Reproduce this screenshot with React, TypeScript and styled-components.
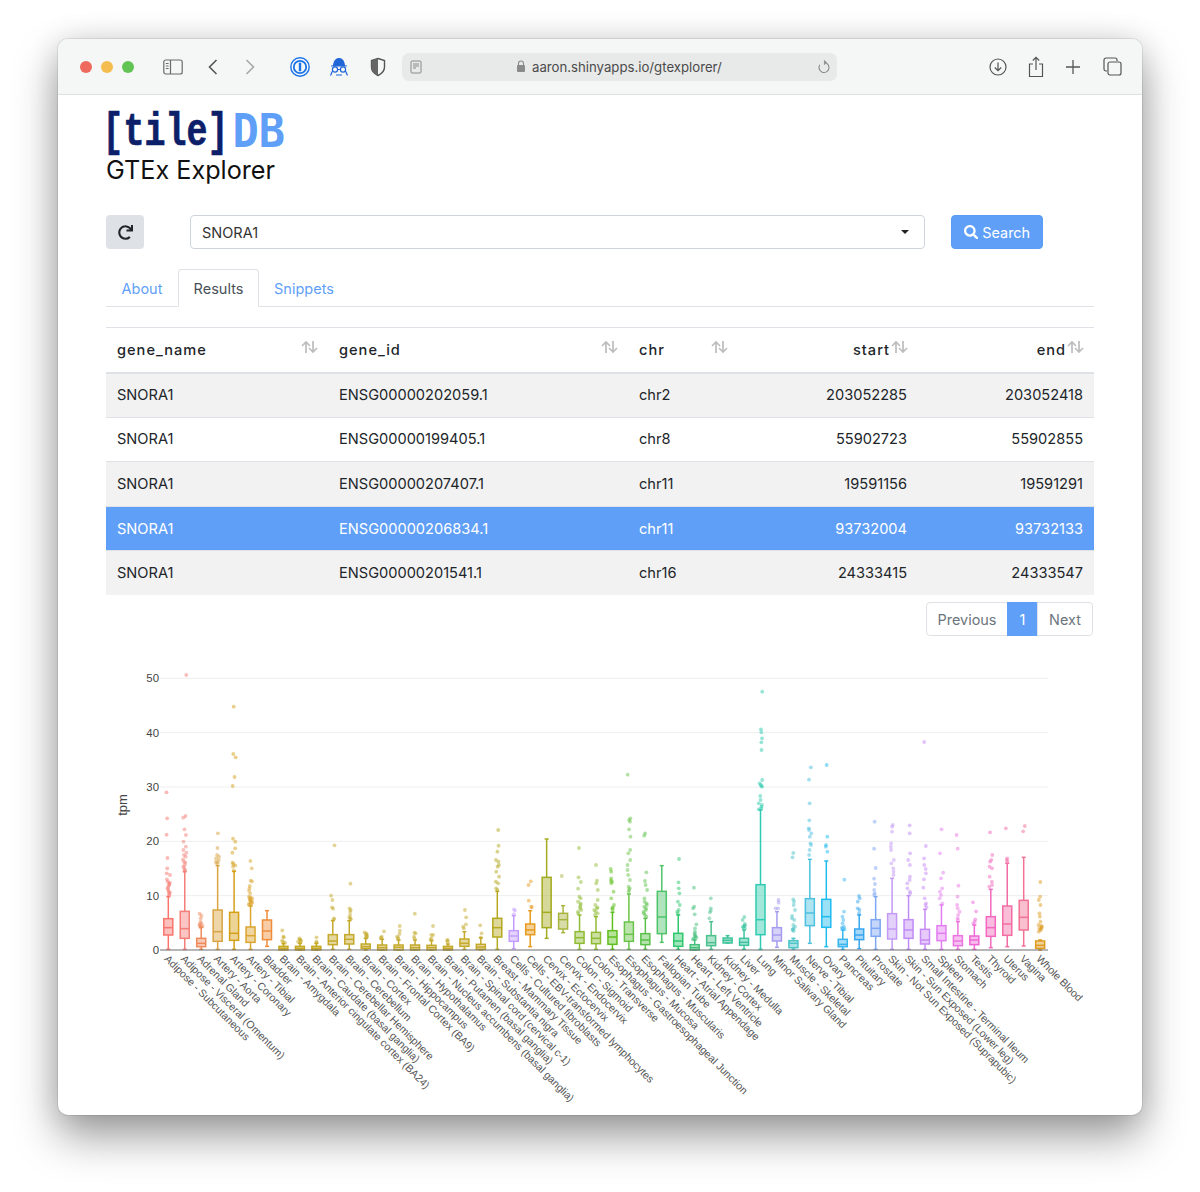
import React from "react";
import styled, { createGlobalStyle } from "styled-components";
import { FaRedo, FaSearch } from "react-icons/fa";

const Global = createGlobalStyle`
  html, body { margin: 0; padding: 0; background: #fff; }
  body { font-family: Inter, "Liberation Sans", sans-serif; color: #212529; }
`;

const Page = styled.div`
  width: 1200px;
  height: 1192px;
  padding: 39px 58px 0;
  box-sizing: border-box;
  overflow: hidden;
`;
const Win = styled.div`
  width: 1084px;
  height: 1076px;
  background: #fff;
  border-radius: 10px;
  overflow: hidden;
  box-shadow: 0 0 0 1px rgba(0, 0, 0, 0.08), 0 22px 44px rgba(0, 0, 0, 0.38), 0 0 30px rgba(0, 0, 0, 0.12);
`;
const Toolbar = styled.header`
  height: 56px;
  box-sizing: border-box;
  background: #f5f6f6;
  border-bottom: 1px solid #dfdfdf;
  display: flex;
  align-items: center;
  padding-left: 22px;
`;
const Dot = styled.span<{ $c: string }>`
  width: 12px;
  height: 12px;
  border-radius: 50%;
  background: ${(p) => p.$c};
  margin-right: 9px;
  flex: none;
`;
const Tool = styled.svg<{ $ml: number }>`
  flex: none;
  display: block;
  margin-left: ${(p) => p.$ml}px;
`;
const UrlBar = styled.div`
  margin-left: 16px;
  width: 435px;
  height: 28px;
  background: #e8e9e9;
  border-radius: 7px;
  display: flex;
  align-items: center;
  padding: 0 6px 0 8px;
  box-sizing: border-box;
  flex: none;
`;
const UrlText = styled.span`
  font-size: 13.2px;
  color: #4b4b4b;
  margin-left: 6px;
  font-family: Inter, sans-serif;
`;
const Content = styled.main`
  padding: 0 48px;
`;
const LogoSvg = styled.svg`
  display: block;
  margin-top: 8px;
  overflow: visible;
`;
const Title = styled.h1`
  margin: -1px 0 0;
  font-size: 25.2px;
  line-height: 32px;
  font-weight: 400;
  color: #111;
`;
const Controls = styled.div`
  display: flex;
  margin-top: 29px;
  height: 34px;
`;
const RefreshBtn = styled.button`
  width: 38px;
  height: 34px;
  border: 0;
  border-radius: 4px;
  background: #dee2e6;
  color: #212529;
  display: flex;
  align-items: center;
  justify-content: center;
  padding: 0;
  font-size: 15px;
`;
const SelectBox = styled.div`
  margin-left: 46px;
  width: 735px;
  box-sizing: border-box;
  border: 1px solid #ced4da;
  border-radius: 4px;
  display: flex;
  align-items: center;
  justify-content: space-between;
  padding: 0 15px 0 11px;
  font-size: 14.5px;
  color: #333;
`;
const Caret = styled.span`
  width: 0;
  height: 0;
  border-left: 4px solid transparent;
  border-right: 4px solid transparent;
  border-top: 4px solid #222;
`;
const SearchBtn = styled.button`
  margin-left: 26px;
  width: 92px;
  border: 1px solid #5a9bf3;
  border-radius: 4px;
  background: #5f9ff8;
  color: #fff;
  font: 400 14.4px Inter, sans-serif;
  display: flex;
  align-items: center;
  justify-content: center;
  gap: 4px;
  padding: 0;
`;
const Tabs = styled.nav`
  display: flex;
  margin-top: 20px;
  height: 38px;
  box-sizing: border-box;
  border-bottom: 1px solid #dee2e6;
  font-size: 14.5px;
`;
const Tab = styled.span<{ $active?: boolean; $w: number }>`
  width: ${(p) => p.$w}px;
  height: 38px;
  box-sizing: border-box;
  display: flex;
  align-items: center;
  justify-content: center;
  border: 1px solid ${(p) => (p.$active ? "#dee2e6" : "transparent")};
  border-bottom-color: ${(p) => (p.$active ? "#fff" : "transparent")};
  border-radius: 4px 4px 0 0;
  color: ${(p) => (p.$active ? "#495057" : "#5f9ff8")};
  background: ${(p) => (p.$active ? "#fff" : "transparent")};
`;
const Table = styled.table`
  margin-top: 20px;
  width: 988px;
  table-layout: fixed;
  border-collapse: collapse;
  font-size: 14.6px;
`;
const Th = styled.th<{ $w: number }>`
  width: ${(p) => p.$w}px;
  height: 45px;
  padding: 0 10px 0 11px;
  box-sizing: border-box;
  border-top: 1px solid #dee2e6;
  border-bottom: 2px solid #dee2e6;
  font-weight: 500;
  letter-spacing: 1px;
  color: #212529;
`;
const ThInner = styled.div<{ $right?: boolean }>`
  display: flex;
  align-items: center;
  justify-content: ${(p) => (p.$right ? "flex-end" : "space-between")};
`;
const SortIcon = styled.svg`
  flex: none;
  display: block;
  margin-top: -5px;
  margin-left: 1px;
`;
const Tr = styled.tr<{ $odd: boolean; $sel: boolean }>`
  background: ${(p) => (p.$sel ? "#5f9ff8" : p.$odd ? "#f2f2f2" : "#fff")};
  color: ${(p) => (p.$sel ? "#fff" : "#212529")};
`;
const Td = styled.td<{ $right?: boolean }>`
  height: 44.6px;
  padding: 0 11px;
  box-sizing: border-box;
  border-top: 1px solid #dee2e6;
  text-align: ${(p) => (p.$right ? "right" : "left")};
`;
const Pager = styled.div`
  display: flex;
  justify-content: flex-end;
  margin: 7px 1px 0 0;
  font-size: 14.4px;
`;
const PageBtn = styled.span<{ $active?: boolean; $w: number; $pos?: "l" | "r" }>`
  width: ${(p) => p.$w}px;
  height: 34px;
  box-sizing: border-box;
  display: flex;
  align-items: center;
  justify-content: center;
  border: 1px solid ${(p) => (p.$active ? "#5f9ff8" : "#dee2e6")};
  background: ${(p) => (p.$active ? "#5f9ff8" : "#fff")};
  color: ${(p) => (p.$active ? "#fff" : "#6c757d")};
  border-radius: ${(p) => (p.$pos === "l" ? "4px 0 0 4px" : p.$pos === "r" ? "0 4px 4px 0" : "0")};
  margin-left: ${(p) => (p.$pos === "l" ? "0" : "-1px")};
`;
const ChartSvg = styled.svg`
  display: block;
  margin-top: 24px;
  overflow: visible;
`;
const AxisText = styled.text`
  font-family: "Liberation Sans", Arial, sans-serif;
  font-size: 11.4px;
  fill: #444;
`;
const AxisTitle = styled.text`
  font-family: "Liberation Sans", Arial, sans-serif;
  font-size: 13px;
  fill: #444;
`;
const TickLabel = styled.text`
  font-family: "Liberation Sans", Arial, sans-serif;
  font-size: 10.6px;
  fill: #555;
`;

type Box = { name: string; c: string; hi: number; q3: number; med: number; q1: number; lo: number; out: number[] };
const b = (name: string, c: string, hi: number, q3: number, med: number, q1: number, lo: number, out: number[] = []): Box => ({ name, c, hi, q3, med, q1, lo, out });
const dense = (from: number, to: number, step: number) => {
  const r: number[] = [];
  for (let v = from; v <= to; v += step) r.push(v);
  return r;
};

// Vertical values are in thirds of a pixel, measured down from the top of the plot region.
const boxes: Box[] = [
  b("Adipose - Subcutaneous", "#f8766d", 680, 746, 773, 795, 838, [367, 445, 494, 564, 595, 610, 615, 628, 635, 638, 642, 645, 650, 655, 660, 665, 668, 672, 676]),
  b("Adipose - Visceral (Omentum)", "#f47f78", 605, 724, 776, 805, 838, [15, 438, 443, 478, 495, 515, 530, 540, 548, 555, 560, 568, 575, 578, 585, 590, 595, 600, 603]),
  b("Adrenal Gland", "#ef8a5c", 772, 805, 820, 830, 838, [731, 737, 745, 755, 760, 763, 765, 768, 770, 772]),
  b("Artery - Aorta", "#d9a441", 587, 720, 785, 814, 838, [490, 534, 555, 560, 565, 570, 575, 578, 580]),
  b("Artery - Coronary", "#d4a017", 604, 727, 790, 811, 838, [110, 252, 262, 321, 348, 506, 515, 535, 548, 578, 582, 586, 590, 602]),
  b("Artery - Tibial", "#dba52f", 708, 771, 797, 817, 838, [573, 595, 632, 634, 648, 655, 662, 670, ...dense(680, 706, 2)]),
  b("Bladder", "#ee8e3c", 722, 750, 783, 809, 829),
  b("Brain - Amygdala", "#c6a822", 821, 829, 835, 840, 840, [781, 800, 802, 812, 816, 818]),
  b("Brain - Anterior cingulate cortex (BA24)", "#c6a822", 820, 829, 835, 840, 840, [805, 808, 810, 812, 815, 818]),
  b("Brain - Caudate (basal ganglia)", "#c6a822", 820, 829, 835, 840, 840, [802, 815, 818]),
  b("Brain - Cerebellar Hemisphere", "#c4a92a", 752, 794, 813, 824, 838, [526, 677, 690, 712, 716, 745, 748]),
  b("Brain - Cerebellum", "#c4a92a", 752, 794, 808, 822, 838, [641, 715, 720, 725, 735, 742, 745, 748]),
  b("Brain - Cortex", "#c4a92a", 805, 822, 830, 836, 840, [787, 790, 793, 795, 798, 800, 803]),
  b("Brain - Frontal Cortex (BA9)", "#c4a92a", 808, 825, 833, 840, 840, [784, 800, 803, 805]),
  b("Brain - Hippocampus", "#c4a92a", 810, 825, 832, 840, 840, [768, 782, 792, 800, 803, 807]),
  b("Brain - Hypothalamus", "#c4a92a", 810, 825, 833, 840, 840, [731, 788, 790, 800, 805]),
  b("Brain - Nucleus accumbens (basal ganglia)", "#c4a92a", 812, 826, 833, 840, 840, [768, 795, 795, 806, 808]),
  b("Brain - Putamen (basal ganglia)", "#c4a92a", 822, 829, 835, 840, 840, [810, 812, 815]),
  b("Brain - Spinal cord (cervical c-1)", "#c4a92a", 785, 807, 820, 829, 838, [720, 742, 763, 770, 775]),
  b("Brain - Substantia nigra", "#c4a92a", 803, 823, 831, 838, 840, [766, 790, 803]),
  b("Breast - Mammary Tissue", "#b5a81e", 664, 745, 773, 801, 838, [480, 527, 545, 570, 575, 585, 590, 605, 620, 635, 640, 655, 660]),
  b("Cells - Cultured fibroblasts", "#c49cff", 737, 782, 798, 814, 836, [718, 722, 733]),
  b("Cells - EBV-transformed lymphocytes", "#e79a1d", 722, 762, 780, 794, 830, [634, 645, 692, 711, 711]),
  b("Cervix - Ectocervix", "#a3ab1e", 507, 622, 727, 773, 805),
  b("Cervix - Endocervix", "#a9b43f", 707, 730, 749, 777, 788, [618]),
  b("Colon - Sigmoid", "#8fbb34", 735, 785, 803, 820, 838, [534, 622, 636, 656, 680, 685, 695, 700, 705, 710, 715, 720, 725, 730]),
  b("Colon - Transverse", "#8fbb34", 740, 787, 805, 821, 838, [585, 632, 640, 660, 690, 705, 712, 715, 720, 725, 730, 735]),
  b("Esophagus - Gastroesophageal Junction", "#5fbf1e", 727, 782, 801, 823, 838, [597, 605, 625, 632, 635, 640, 665, 685, 705, 712, 715, 720]),
  b("Esophagus - Mucosa", "#69c34a", 672, 756, 793, 814, 838, [314, 445, 450, 455, 478, 500, 540, 550, 570, 585, 600, 615, 630, 650, 655, 660, 665]),
  b("Esophagus - Muscularis", "#59c14a", 745, 791, 810, 824, 838, [490, 497, 607, 633, 645, 660, 685, 695, 700, 705, 710, 715, 720, 725, 730, 735, 740]),
  b("Fallopian Tube", "#4fc46a", 587, 664, 741, 791, 817),
  b("Heart - Atrial Appendage", "#2ec76d", 735, 790, 813, 829, 838, [567, 637, 655, 670, 695, 705, 720, 725, 730]),
  b("Heart - Left Ventricle", "#43c07a", 810, 824, 833, 840, 840, [653, 710, 715, 733, 763, 775, 785, 790, 795, 798, 800, 803, 805, 808]),
  b("Kidney - Cortex", "#4cc18e", 755, 797, 818, 827, 838, [685, 715, 722, 727, 745]),
  b("Kidney - Medulla", "#3fc49a", 797, 804, 811, 819, 819),
  b("Liver", "#3cc3a0", 780, 805, 817, 826, 838, [741, 750, 762, 766, 768, 770, 772, 775]),
  b("Lung", "#2fcbb0", 420, 644, 749, 794, 838, [65, 178, 187, 205, 217, 240, 330, 340, 345, 348, 350, 378, 390, 400, 405, 410, 415, 418]),
  b("Minor Salivary Gland", "#a49cf0", 725, 773, 795, 813, 832, [690, 698, 715, 715]),
  b("Muscle - Skeletal", "#4cc4c8", 805, 812, 820, 833, 838, [549, 562, 688, 695, 705, 720, 738, 745, 750, 765, 770, 775, 778, 780, 783]),
  b("Nerve - Tibial", "#4cc0df", 568, 686, 729, 767, 820, [292, 329, 400, 451, 475, 480, 490, 500, 520, 525, 540, 555]),
  b("Ovary", "#1fbcf0", 573, 688, 740, 772, 830, [285, 500, 525, 530, 545]),
  b("Pancreas", "#39b6ef", 780, 808, 823, 830, 838, [629, 725, 740, 750, 760, 770, 773, 775, 778]),
  b("Pituitary", "#36a6ef", 735, 777, 795, 809, 836, [678, 685, 695, 715, 720, 730]),
  b("Prostate", "#7da6f4", 680, 749, 775, 799, 838, [455, 536, 594, 626, 642, 660, 670, 675]),
  b("Skin - Not Sun Exposed (Suprapubic)", "#c39af4", 625, 731, 777, 807, 838, [465, 470, 485, 520, 530, 540, 570, 580, 595, 605, 615]),
  b("Skin - Sun Exposed (Lower leg)", "#c08cf6", 677, 749, 780, 805, 838, [466, 490, 550, 570, 585, 620, 630, 640, 655, 665, 670]),
  b("Small Intestine - Terminal Ileum", "#c78af5", 718, 778, 810, 822, 838, [216, 528, 565, 585, 597, 610, 628, 653, 685, 700, 705, 712]),
  b("Spleen", "#e37df2", 705, 767, 790, 812, 838, [478, 550, 608, 625, 655, 665, 675, 685, 700]),
  b("Stomach", "#ec75e0", 755, 797, 813, 827, 838, [495, 536, 647, 680, 705, 715, 725, 735, 745, 750]),
  b("Testis", "#ee66d5", 765, 798, 810, 824, 838, [697, 724, 748, 755, 760]),
  b("Thyroid", "#f268bf", 658, 740, 773, 799, 833, [487, 555, 570, 575, 590, 595, 620, 635, 645, 650]),
  b("Uterus", "#f26ca6", 580, 708, 762, 796, 830, [475, 565, 570, 575]),
  b("Vagina", "#f27295", 562, 691, 742, 780, 828, [468, 484]),
  b("Whole Blood", "#dd9b1f", 810, 813, 826, 835, 840, [636, 680, 690, 705, 730, 740, 755, 765, 768, 770, 773, 775, 778, 780, 785]),
];

const PLOT_TOP = 10; // svg y of the region that the measurements start from
const Y = (t: number) => PLOT_TOP + t / 3;
const X = (i: number) => 62.3 + i * 16.45;
const jitter = (i: number, k: number) => {
  const s = Math.sin(i * 12.9898 + k * 78.233) * 43758.5453;
  return (s - Math.floor(s) - 0.5) * 3.6;
};

const Chart = () => (
  <ChartSvg width={988} height={450} viewBox="0 0 988 450" role="img" aria-label="tpm by tissue">
    {[10, 20, 30, 40, 50].map((v) => {
      const y = Y(840 - v * 16.3);
      return (
        <g key={v}>
          <line x1={54} x2={942} y1={y} y2={y} stroke="#eeeeee" strokeWidth={1} />
          <AxisText x={53} y={y + 4} textAnchor="end">{v}</AxisText>
        </g>
      );
    })}
    <AxisText x={53} y={Y(840) + 4} textAnchor="end">0</AxisText>
    <AxisTitle transform="translate(21 145) rotate(-90)" textAnchor="middle">tpm</AxisTitle>
    {boxes.map((d, i) => {
      const x = X(i);
      return (
        <g key={d.name}>
          {d.out.map((o, k) => (
            <circle key={k} cx={x + jitter(i, k)} cy={Y(o)} r={1.9} fill={d.c} opacity={0.5} />
          ))}
          <line x1={x} x2={x} y1={Y(d.hi)} y2={Y(d.q3)} stroke={d.c} strokeWidth={1.5} />
          <line x1={x} x2={x} y1={Y(d.q1)} y2={Y(d.lo)} stroke={d.c} strokeWidth={1.5} />
          <line x1={x - 2} x2={x + 2} y1={Y(d.hi)} y2={Y(d.hi)} stroke={d.c} strokeWidth={1.5} />
          <line x1={x - 2} x2={x + 2} y1={Y(d.lo)} y2={Y(d.lo)} stroke={d.c} strokeWidth={1.5} />
          <rect x={x - 4.5} y={Y(d.q3)} width={9} height={(d.q1 - d.q3) / 3} fill={d.c} fillOpacity={0.45} stroke={d.c} strokeWidth={1.5} />
          <line x1={x - 4.5} x2={x + 4.5} y1={Y(d.med)} y2={Y(d.med)} stroke={d.c} strokeWidth={1.5} />
        </g>
      );
    })}
    <line x1={54} x2={942} y1={Y(840)} y2={Y(840)} stroke="#6e6e6e" strokeWidth={1.2} />
    {boxes.map((d, i) => (
      <TickLabel key={d.name} transform={`translate(${X(i) - 4.5} ${Y(840) + 9.5}) rotate(45)`}>
        {d.name}
      </TickLabel>
    ))}
  </ChartSvg>
);

const Sort = () => (
  <SortIcon width="17" height="14" viewBox="0 0 17 14" fill="none" stroke="#bdbdbd" strokeWidth="1.7">
    <path d="M5 13V2M1 6l4-4 4 4" />
    <path d="M12 1v11M8 8l4 4 4-4" />
  </SortIcon>
);

const rows = [
  ["SNORA1", "ENSG00000202059.1", "chr2", "203052285", "203052418"],
  ["SNORA1", "ENSG00000199405.1", "chr8", "55902723", "55902855"],
  ["SNORA1", "ENSG00000207407.1", "chr11", "19591156", "19591291"],
  ["SNORA1", "ENSG00000206834.1", "chr11", "93732004", "93732133"],
  ["SNORA1", "ENSG00000201541.1", "chr16", "24333415", "24333547"],
];
const cols: [string, number, boolean][] = [
  ["gene_name", 222, false],
  ["gene_id", 300, false],
  ["chr", 110, false],
  ["start", 180, true],
  ["end", 176, true],
];

export default function App() {
  return (
    <Page>
      <Global />
      <Win>
        <Toolbar>
          <Dot $c="#ee6a5f" />
          <Dot $c="#f5bd4f" />
          <Dot $c="#61c454" />
          <Tool $ml={20} width="20" height="16" viewBox="0 0 20 16" fill="none" stroke="#6b6b6b" strokeWidth="1.2">
            <rect x="0.8" y="1" width="18.4" height="14" rx="2" />
            <path d="M7.5 1v14M2.8 4.5h2.8M2.8 7h2.8M2.8 9.5h2.8" />
          </Tool>
          <Tool $ml={25} width="10" height="16" viewBox="0 0 10 16" fill="none" stroke="#555" strokeWidth="1.6">
            <path d="M8.5 1 1.5 8l7 7" />
          </Tool>
          <Tool $ml={27} width="10" height="16" viewBox="0 0 10 16" fill="none" stroke="#a8a8a8" strokeWidth="1.6">
            <path d="M1.5 1l7 7-7 7" />
          </Tool>
          <Tool $ml={35} width="20" height="20" viewBox="0 0 20 20" fill="none" stroke="#1a73e8">
            <circle cx="10" cy="10" r="9.2" strokeWidth="1.4" />
            <circle cx="10" cy="10" r="6.2" strokeWidth="1.8" />
            <path d="M10 5.8v8.4" strokeWidth="2.4" />
          </Tool>
          <Tool $ml={19} width="20" height="20" viewBox="0 0 20 20" fill="none" stroke="#2166d8" strokeWidth="1.2">
            <path d="M4.5 8.5C5 4 7 1.5 10 1.5S15 4 15.5 8.5z" fill="#2166d8" />
            <path d="M2 9h16" />
            <circle cx="6" cy="12.5" r="2.6" />
            <circle cx="14" cy="12.5" r="2.6" />
            <path d="M8.6 12.5h2.8M1.5 18.5 3.5 14M18.5 18.5 16.500 14M7 18h6" />
          </Tool>
          <Tool $ml={21} width="16" height="20" viewBox="0 0 16 20" fill="none">
            <path d="M8 1.500 14.500 3.500V10c0 4-2.800 6.800-6.500 8.500C4.300 16.800 1.500 14 1.500 10V3.500z" stroke="#555" strokeWidth="1.4" />
            <path d="M8 1.500V18.500C4.300 16.800 1.500 14 1.500 10V3.500z" fill="#666" />
          </Tool>
          <UrlBar>
            <Tool $ml={0} width="12" height="14" viewBox="0 0 12 14" fill="none" stroke="#8a8a8a" strokeWidth="1">
              <rect x="1" y="1" width="10" height="12" rx="1" />
              <path d="M3 4h6M3 6h6M3 8h3" />
            </Tool>
            <Tool $ml={94} width="10" height="13" viewBox="0 0 10 13" fill="#8a8a8a">
              <path d="M2.500 5V3.500a2.500 2.500 0 0 1 5 0V5" fill="none" stroke="#8a8a8a" strokeWidth="1.100" />
              <rect x="1" y="5" width="8" height="7" rx="1" />
            </Tool>
            <UrlText>aaron.shinyapps.io/gtexplorer/</UrlText>
            <Tool $ml={95} width="14" height="14" viewBox="0 0 14 14" fill="none" stroke="#8a8a8a" strokeWidth="1.1">
              <path d="M7 2.500A5 5 0 1 1 2.800 4.800M7 .5l2 2-2 2" />
            </Tool>
          </UrlBar>
          <Tool $ml={152} width="18" height="18" viewBox="0 0 18 18" fill="none" stroke="#555" strokeWidth="1.2">
            <circle cx="9" cy="9" r="8" />
            <path d="M9 4.500v8M5.800 9.500 9 12.700l3.200-3.200" />
          </Tool>
          <Tool $ml={21} width="16" height="22" viewBox="0 0 16 22" fill="none" stroke="#555" strokeWidth="1.2">
            <path d="M5 8H1.500v12.500h13V8H11M8 14V1.500M4.800 4.500 8 1.300l3.200 3.200" />
          </Tool>
          <Tool $ml={21} width="16" height="16" viewBox="0 0 16 16" fill="none" stroke="#555" strokeWidth="1.3">
            <path d="M8 1v14M1 8h14" />
          </Tool>
          <Tool $ml={22} width="19" height="19" viewBox="0 0 19 19" fill="none" stroke="#555" strokeWidth="1.2">
            <path d="M4 14H3a2 2 0 0 1-2-2V3a2 2 0 0 1 2-2h9a2 2 0 0 1 2 2v1" />
            <rect x="5" y="5" width="13" height="13" rx="2" />
          </Tool>
        </Toolbar>
        <Content>
          <LogoSvg width="190" height="52" viewBox="0 0 190 52" role="img" aria-label="tileDB logo">
            <text transform="translate(-3.500 42) scale(0.795 1.04)" fontFamily="'Liberation Mono', monospace" fontWeight="700" fontSize="44" fill="#0b2069" stroke="#0b2069" strokeWidth="0.7">[tile]</text>
            <text transform="translate(126.500 44) scale(0.95 1)" fontFamily="'DejaVu Sans Mono', monospace" fontWeight="700" fontSize="46" fill="#5f9ff8">DB</text>
          </LogoSvg>
          <Title>GTEx Explorer</Title>
          <Controls>
            <RefreshBtn aria-label="Refresh"><FaRedo /></RefreshBtn>
            <SelectBox>SNORA1<Caret /></SelectBox>
            <SearchBtn><FaSearch />Search</SearchBtn>
          </Controls>
          <Tabs>
            <Tab $w={72}>About</Tab>
            <Tab $w={81} $active>Results</Tab>
            <Tab $w={90}>Snippets</Tab>
          </Tabs>
          <Table>
            <thead>
              <tr>
                {cols.map(([name, w, right]) => (
                  <Th key={name} $w={w}>
                    <ThInner $right={right}>
                      <span>{name}</span>
                      <Sort />
                    </ThInner>
                  </Th>
                ))}
              </tr>
            </thead>
            <tbody>
              {rows.map((r, i) => (
                <Tr key={r[1]} $odd={i % 2 === 0} $sel={i === 3}>
                  {r.map((v, j) => (
                    <Td key={j} $right={j > 2}>{v}</Td>
                  ))}
                </Tr>
              ))}
            </tbody>
          </Table>
          <Pager>
            <PageBtn $w={82} $pos="l">Previous</PageBtn>
            <PageBtn $w={31} $active>1</PageBtn>
            <PageBtn $w={56} $pos="r">Next</PageBtn>
          </Pager>
          <Chart />
        </Content>
      </Win>
    </Page>
  );
}
